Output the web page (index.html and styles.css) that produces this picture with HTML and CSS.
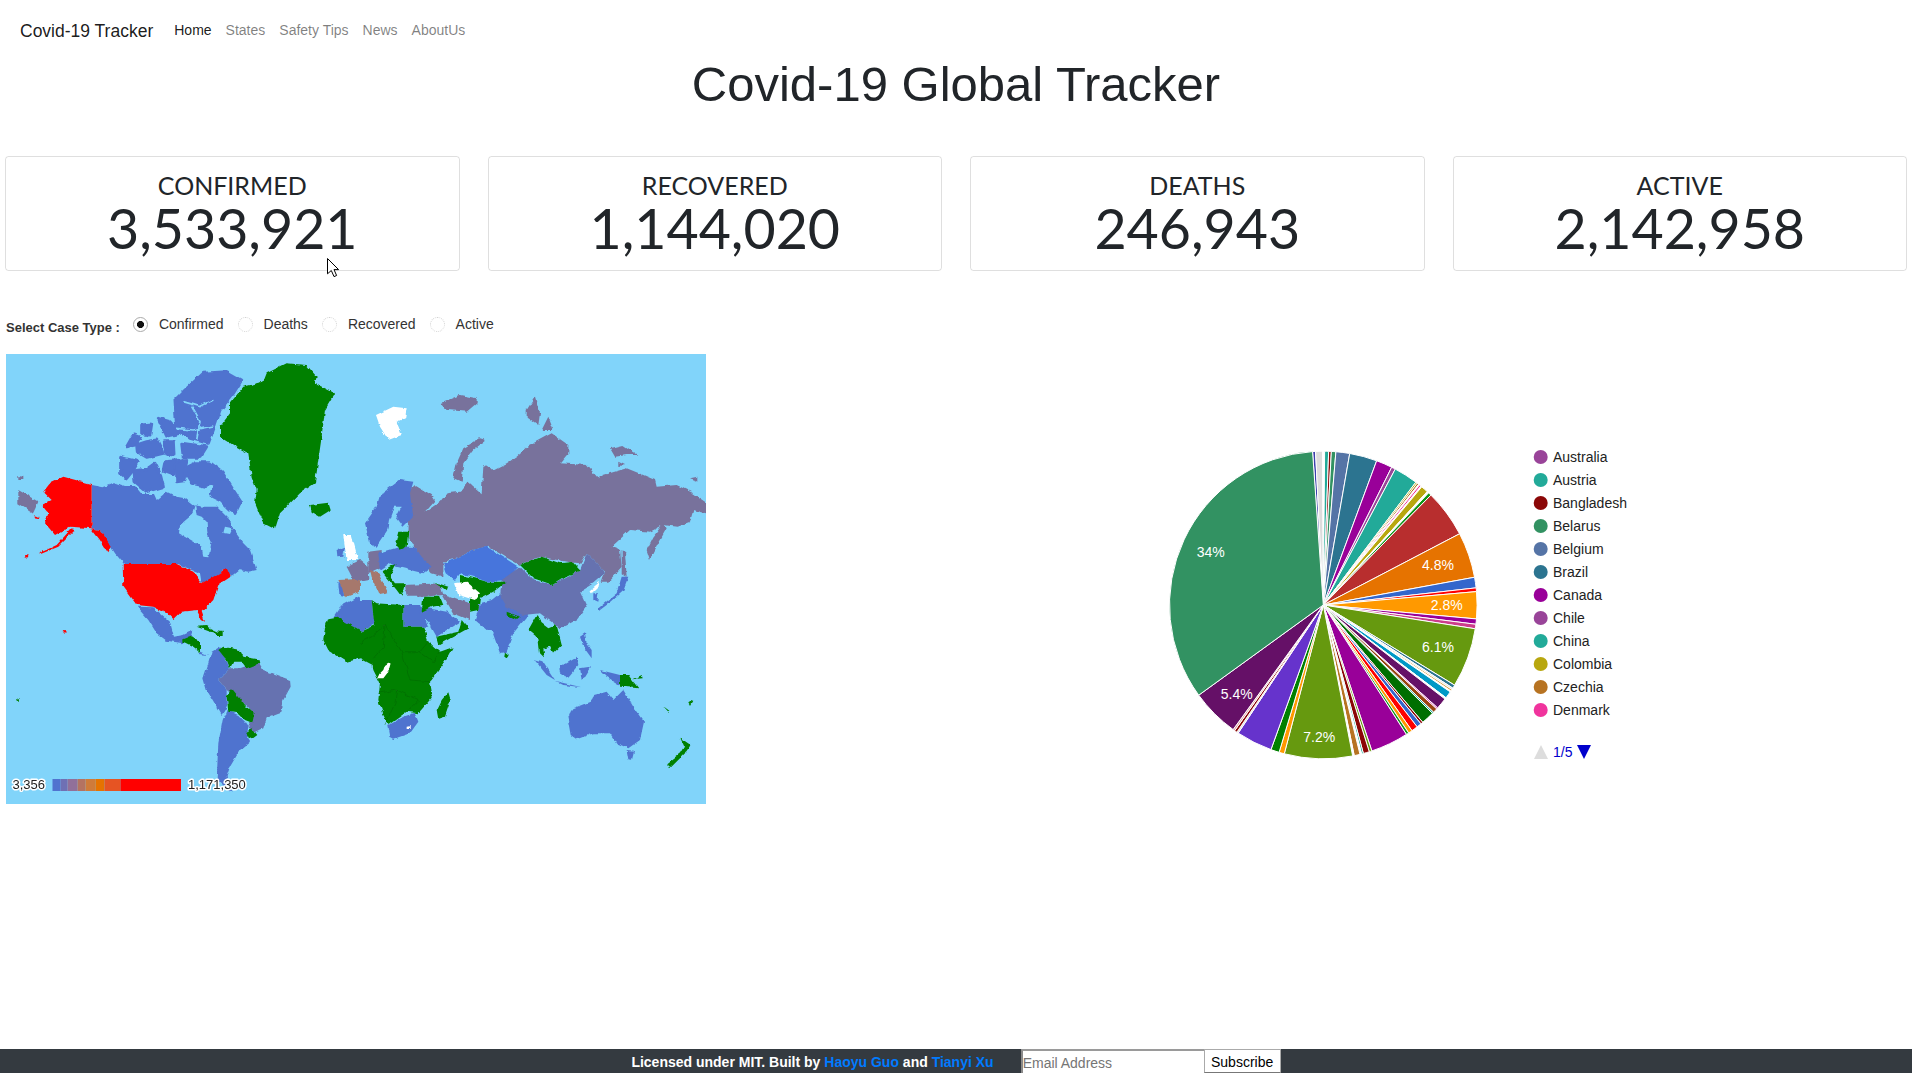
FILE: index.html
```html
<!DOCTYPE html>
<html lang="en">
<head>
<meta charset="utf-8">
<title>Covid-19 Global Tracker</title>
<link rel="stylesheet" href="styles.css">
</head>
<body>
<nav class="navbar">
  <a class="brand" href="#">Covid-19 Tracker</a>
  <ul class="nav-links">
    <li><a class="nav-link active" href="#">Home</a></li>
    <li><a class="nav-link" href="#">States</a></li>
    <li><a class="nav-link" href="#">Safety Tips</a></li>
    <li><a class="nav-link" href="#">News</a></li>
    <li><a class="nav-link" href="#">AboutUs</a></li>
  </ul>
</nav>
<main class="content">
  <h1 class="title">Covid-19 Global Tracker</h1>
  <section class="cards">
    <div class="card"><div class="card-label">CONFIRMED</div><div class="card-value">3,533,921</div></div>
    <div class="card"><div class="card-label">RECOVERED</div><div class="card-value">1,144,020</div></div>
    <div class="card"><div class="card-label">DEATHS</div><div class="card-value">246,943</div></div>
    <div class="card"><div class="card-label">ACTIVE</div><div class="card-value">2,142,958</div></div>
  </section>
  <form class="case-type">
    <span class="case-title">Select Case Type :</span>
    <label class="radio"><input type="radio" name="case" checked><span class="dot"></span>Confirmed</label>
    <label class="radio"><input type="radio" name="case"><span class="dot"></span>Deaths</label>
    <label class="radio"><input type="radio" name="case"><span class="dot"></span>Recovered</label>
    <label class="radio"><input type="radio" name="case"><span class="dot"></span>Active</label>
  </form>
  <section class="charts">
    <svg class="map" viewBox="6 354 700 450" width="700" height="450" xmlns="http://www.w3.org/2000/svg">
      <defs>
        <filter id="rough" filterUnits="userSpaceOnUse" x="0" y="340" width="720" height="480">
          <feTurbulence type="fractalNoise" baseFrequency="0.14" numOctaves="3" seed="4" result="n"/>
          <feDisplacementMap in="SourceGraphic" in2="n" scale="4" xChannelSelector="R" yChannelSelector="G"/>
        </filter>
      </defs>
      <rect x="6" y="354" width="700" height="450" class="sea"/>
      <g filter="url(#rough)">
      <!-- north america, atlantic: coordinates at 3x from (0,350) -->
      <g transform="translate(0,350) scale(.33333)">
        <g class="blue">
          <polygon points="276,405 310,412 345,398 375,408 405,408 425,432 462,432 470,450 500,425 530,440 555,445 580,465 610,470 650,470 690,510 705,545 730,580 750,600 770,660 745,665 720,660 695,680 670,660 640,685 605,700 600,670 575,660 535,642 372,642 345,610 300,540 276,535"/>
          <polygon points="410,770 460,772 510,815 522,860 550,855 580,840 570,868 550,880 500,872 470,850 445,810"/>
          <polygon points="1000,800 1020,770 1080,738 1080,840"/>
          <polygon points="1010,600 1035,590 1030,620 1012,622"/>
          <polygon points="1015,700 1030,700 1032,738 1018,735"/>
        </g>
        <g class="blue arctic">
          <polygon points="565,350 590,338 630,338 665,365 690,405 722,455 705,490 690,480 660,450 640,440 620,410 600,405 575,400 560,375"/>
          <polygon points="362,322 415,335 400,360 380,385 362,370"/>
          <polygon points="402,362 440,358 465,340 480,370 490,410 440,425 405,395"/>
          <polygon points="555,120 610,70 680,65 725,90 700,130 660,180 640,240 625,280 570,265 530,235 525,150"/>
          <polygon points="380,290 400,255 420,262 405,285"/>
          <polygon points="410,285 440,275 470,270 490,310 440,322 412,305"/>
          <polygon points="475,205 510,215 540,250 500,258"/>
          <polygon points="545,280 620,290 600,322 550,322"/>
          <polygon points="495,335 528,332 522,372 490,360"/>
          <polygon points="530,335 560,330 552,392 530,395"/>
          <polygon points="425,225 455,222 450,255 425,250"/>
          <polygon points="490,275 520,275 522,315 500,312"/>
        </g>
        <polygon class="sea" points="585,462 575,495 540,525 537,550 570,570 605,590 610,620 625,622 635,575 622,550 620,515 605,500 590,495"/>
        <polygon class="sea" points="675,530 698,535 690,552 670,548"/>
        <polygon class="sea" points="620,410 640,405 625,440 605,440"/>
        <polyline class="channel" points="550,155 600,170 640,150"/>
        <polyline class="channel" points="575,170 600,215 590,270"/>
        <polyline class="channel" points="528,235 580,240 640,228"/>
        <g class="green">
          <polygon points="660,230 690,190 690,160 730,110 790,95 800,70 860,40 920,45 950,80 945,100 975,115 1005,130 975,180 965,260 955,330 945,400 900,430 860,470 840,490 825,538 790,520 765,460 770,420 755,380 745,310 700,285 660,260"/>
          <polygon points="930,465 985,458 992,480 960,500 935,485"/>
        </g>
        <g class="red">
          <polygon points="275,403 190,380 150,400 130,425 155,450 125,465 145,490 135,520 165,555 210,530 275,535 300,540 335,590 325,610 300,570 275,538"/>
          <polygon points="118,610 170,585 215,535 220,545 175,590 122,612"/>
          <polygon points="100,495 118,500 118,505 102,502"/>
          <polygon points="368,642 530,642 580,665 605,700 640,680 680,655 692,680 655,705 640,750 605,785 615,815 605,810 590,780 545,785 520,810 500,790 460,770 410,765 370,710"/>
          <circle cx="80" cy="618" r="5"/>
          <circle cx="192" cy="847" r="4"/>
        </g>
        <g class="russia">
          <polygon points="55,420 115,455 100,488 55,460"/>
          <polygon points="55,378 70,380 70,390 55,390"/>
          <polygon points="1040,650 1080,630 1080,695 1060,690 1050,670"/>
        </g>
        <polygon class="brown" points="1015,690 1060,688 1080,695 1080,725 1035,742 1025,710"/>
        <polygon class="white" points="1030,555 1055,555 1075,630 1040,630"/>
      </g>
      <!-- eurasia: coordinates at 3x from (360,350) -->
      <g transform="translate(360,350) scale(.33333)">
        <polygon class="white" points="48,195 100,170 140,175 135,205 110,215 125,255 85,270 60,230"/>
        <g class="russia">
          <polygon points="148,420 165,405 215,435 225,450 190,490 240,455 260,430 300,425 325,395 365,430 370,350 385,345 400,360 440,340 470,320 510,285 575,250 625,285 625,310 600,340 680,345 715,385 730,375 800,355 850,375 885,390 890,410 950,405 1000,430 1038,455 1038,490 1000,480 990,515 950,530 910,525 870,545 810,540 755,590 780,600 785,650 745,695 725,695 735,665 680,610 660,640 620,635 540,620 480,645 435,620 385,590 335,600 290,625 250,635 250,680 215,670 190,640 165,590 145,570"/>
          <polygon points="280,385 290,340 310,295 360,265 378,270 340,300 310,340 305,395"/>
          <polygon points="500,180 525,140 540,190 535,225 500,200"/>
          <polygon points="545,240 565,200 580,240"/>
          <polygon points="240,160 300,135 350,145 350,160 320,185 260,180"/>
          <polygon points="750,295 790,285 835,315 800,315 765,320"/>
          <polygon points="775,335 795,345 775,348"/>
          <polygon points="990,385 1012,380 1012,392"/>
          <polygon points="785,600 795,610 800,680 785,670"/>
          <polygon points="860,600 880,560 910,520 920,535 895,580 870,630"/>
          <polygon points="135,705 240,700 250,735 190,740 140,740"/>
          <polygon points="245,730 330,760 330,810 280,790"/>
          <polygon points="0,630 25,650 28,690 0,695"/>
          <polygon points="25,605 65,600 65,650 25,670"/>
        </g>
        <g class="blue">
          <polygon points="60,435 120,390 160,395 150,430 160,500 130,530 100,490 90,530 50,590 30,580 15,520 50,470"/>
          <polygon points="55,610 120,590 165,590 185,620 215,650 190,670 150,660 110,650 90,640 60,660"/>
          <polygon points="395,750 420,730 450,750 490,775 505,795 480,825 460,850 440,905 420,910 395,840 380,840 345,810 360,760"/>
          <polygon points="130,765 180,765 205,830 130,830"/>
          <polygon points="180,795 180,770 260,785 300,815 230,860 205,815"/>
          <polygon points="700,730 715,730 712,755 700,750"/>
          <polygon points="715,775 770,730 785,680 805,680 790,720 740,765 720,780"/>
        </g>
        <polygon class="sea" points="105,470 125,470 100,520 85,540 90,510"/>
        <polygon class="kaz" points="250,640 290,625 335,600 380,590 435,625 475,650 440,690 380,695 340,680 300,670 285,690 260,670"/>
        <polygon class="china" points="425,690 480,650 520,690 580,705 660,660 680,610 730,660 735,670 700,700 660,725 680,770 650,810 600,835 540,790 490,795 440,775 420,740"/>
        <g class="green">
          <polygon points="115,545 145,545 140,590 120,600 105,585"/>
          <polygon points="65,665 110,640 90,680 105,700 135,700 125,740 110,720"/>
          <polygon points="220,695 265,710 260,725"/>
          <polygon points="300,675 345,685 380,695 440,695 400,725 360,745 355,780 330,785 330,745 300,700"/>
          <polygon points="480,645 545,620 600,640 640,635 662,660 620,680 580,705 520,685"/>
          <polygon points="190,740 240,740 250,765 215,770 185,785"/>
          <polygon points="305,810 325,835 235,885 228,860 295,845"/>
          <polygon points="440,785 480,800 470,808 440,795"/>
        </g>
        <polygon class="brown" points="30,660 55,670 85,730 60,735 35,680"/>
        <polygon class="white" points="282,700 320,695 360,730 345,750 295,735"/>
        <polygon class="white" points="690,720 720,695 715,710 695,730"/>
      </g>
      <!-- americas south: coordinates at 3x from (0,600) -->
      <g transform="translate(0,600) scale(.33333)">
        <g class="blue">
          <polygon points="610,235 625,190 635,155 660,140 690,205 655,240 680,270 680,320 665,345 620,270"/>
          <polygon points="680,330 715,345 735,365 745,380 740,410 750,425 720,450 690,500 680,530 695,575 650,540 655,430 668,360"/>
          <polygon points="600,155 625,165 595,162"/>
        </g>
        <polygon class="china" points="655,240 690,205 720,205 775,185 790,210 870,240 872,260 850,300 840,340 800,355 790,385 760,400 745,380 760,350 745,320 680,270"/>
        <g class="green">
          <polygon points="550,118 575,108 600,125 600,155 580,140 550,125"/>
          <polygon points="590,80 620,78 665,100 630,95"/>
          <polygon points="650,95 668,95 668,108 652,108"/>
          <polygon points="655,150 670,140 720,150 730,170 775,178 778,190 740,205 725,185 700,185 690,205 680,180"/>
          <polygon points="680,290 695,265 740,320 765,345 760,370 735,360 715,340 685,335"/>
          <polygon points="740,395 755,385 772,405 755,418 738,408"/>
          <polygon points="985,55 1010,50 1080,90 1080,175 1040,185 985,150 970,120 975,85"/>
          <circle cx="53" cy="302" r="4"/>
        </g>
      </g>
      <!-- africa, oceania: coordinates at 3x from (360,600) -->
      <g transform="translate(360,600) scale(.33333)">
        <g class="blue">
          <polygon points="0,0 35,0 40,50 50,70 0,95"/>
          <polygon points="622,350 640,325 690,305 705,285 740,275 760,300 790,270 820,320 852,365 840,420 805,445 770,430 750,400 700,400 650,418 632,405"/>
          <polygon points="800,450 822,452 815,480 805,478"/>
          <polygon points="522,178 550,185 585,240 560,225"/>
          <polygon points="585,243 665,262 610,255"/>
          <polygon points="600,200 650,170 655,195 625,230 605,225"/>
          <polygon points="660,205 690,200 665,240"/>
          <polygon points="720,210 780,225 780,255 740,230"/>
          <polygon points="660,110 675,100 680,130 695,150 695,175 670,140"/>
          <polygon points="82,378 130,350 165,338 175,365 150,400 100,417 88,410"/>
        </g>
        <g class="green">
          <polygon points="35,0 50,10 130,15 130,80 190,80 205,125 240,155 278,142 260,175 215,240 210,245 218,290 175,340 140,335 85,375 70,345 55,300 60,250 40,210 38,195 0,175 0,95 45,75 40,50"/>
          <polygon points="265,277 272,300 255,350 235,357 230,330 245,300"/>
          <polygon points="958,412 992,435 975,460 930,505 922,490 960,460 972,440"/>
          <polygon points="780,225 805,225 835,265 805,262 780,260"/>
          <polygon points="820,238 845,225 848,235"/>
          <polygon points="505,90 530,45 545,70 565,85 590,75 605,135 580,160 570,140 550,145 555,175 540,160 535,115"/>
          <polygon points="435,155 447,165 440,175 433,170"/>
          <polygon points="910,322 928,335 925,338"/>
          <polygon points="985,310 1000,300 990,318"/>
        </g>
        <g class="border">
          <polyline points="0,130 35,110 75,75 125,155 180,155 205,125"/>
          <polyline points="125,155 150,240 210,245"/>
          <polyline points="55,280 110,270 175,300 140,335"/>
          <polyline points="75,75 70,140 40,175"/>
          <polyline points="180,155 220,185 240,155"/>
          <polyline points="110,270 105,310 75,375"/>
        </g>
        <polygon class="white" points="85,188 92,190 85,215 70,235 52,235 58,222 70,210 75,195"/>
        <polygon class="white" points="140,380 152,378 152,387 140,387"/>
      </g>
      </g>
      <g class="scale">
        <rect x="52.5" y="779" width="8" height="12" fill="#5073cf"/>
        <rect x="60.5" y="779" width="7" height="12" fill="#6f70b4"/>
        <rect x="67.5" y="779" width="10" height="12" fill="#91709a"/>
        <rect x="77.5" y="779" width="8" height="12" fill="#b47362"/>
        <rect x="85.5" y="779" width="10" height="12" fill="#cf7b3a"/>
        <rect x="95.5" y="779" width="9" height="12" fill="#e67300"/>
        <rect x="104.5" y="779" width="16" height="12" fill="#e65423"/>
        <rect x="120.5" y="779" width="60.5" height="12" fill="#ff0000"/>
        <text class="scale-text" x="12.5" y="788.5">3,356</text>
        <text class="scale-text" x="188" y="788.5">1,171,350</text>
      </g>
    </svg>
    <svg class="pie-chart" viewBox="706 354 1206 450" width="1206" height="450" xmlns="http://www.w3.org/2000/svg">
      <g id="pie"></g>
      <g class="pie-labels">
        <text x="1210.7" y="557">34%</text>
        <text x="1438" y="570">4.8%</text>
        <text x="1446.7" y="610">2.8%</text>
        <text x="1438" y="652">6.1%</text>
        <text x="1319.3" y="742">7.2%</text>
        <text x="1236.7" y="699">5.4%</text>
      </g>
      <g class="legend">
        <circle cx="1540.7" cy="457" r="7" fill="#994499"/><text x="1553" y="462">Australia</text>
        <circle cx="1540.7" cy="480" r="7" fill="#22aa99"/><text x="1553" y="485">Austria</text>
        <circle cx="1540.7" cy="503" r="7" fill="#8b0707"/><text x="1553" y="508">Bangladesh</text>
        <circle cx="1540.7" cy="526" r="7" fill="#329262"/><text x="1553" y="531">Belarus</text>
        <circle cx="1540.7" cy="549" r="7" fill="#5574a6"/><text x="1553" y="554">Belgium</text>
        <circle cx="1540.7" cy="572" r="7" fill="#2c7490"/><text x="1553" y="577">Brazil</text>
        <circle cx="1540.7" cy="595" r="7" fill="#990099"/><text x="1553" y="600">Canada</text>
        <circle cx="1540.7" cy="618" r="7" fill="#994499"/><text x="1553" y="623">Chile</text>
        <circle cx="1540.7" cy="641" r="7" fill="#22aa99"/><text x="1553" y="646">China</text>
        <circle cx="1540.7" cy="664" r="7" fill="#b8a70f"/><text x="1553" y="669">Colombia</text>
        <circle cx="1540.7" cy="687" r="7" fill="#b77322"/><text x="1553" y="692">Czechia</text>
        <circle cx="1540.7" cy="710" r="7" fill="#f0349d"/><text x="1553" y="715">Denmark</text>
      </g>
      <polygon points="1534,759 1548,759 1541,745" fill="#dddddd"/>
      <text class="pager" x="1553" y="757">1/5</text>
      <polygon points="1577,745 1591,745 1584,759" fill="#0000cc"/>
    </svg>
  </section>
</main>
<footer class="footer">
  <p class="license">Licensed under MIT. Built by <a href="#">Haoyu Guo</a> and <a href="#">Tianyi Xu</a></p>
  <form class="subscribe">
    <input class="email" type="text" placeholder="Email Address">
    <button class="subscribe-btn" type="button">Subscribe</button>
  </form>
</footer>
<svg class="cursor" width="13" height="20" viewBox="0 0 13 20" xmlns="http://www.w3.org/2000/svg">
  <path d="M.5.5V15.8L4.3 12.5 7 18.6 9.6 17.5 7 11.6H11.6Z" fill="#fff" stroke="#000" stroke-width="1"/>
</svg>
<script src="app.js"></script>
</body>
</html>
```
FILE: styles.css
```css
* { box-sizing: border-box; }
html, body { margin: 0; padding: 0; }
body {
  min-height: 100vh;
  display: flex;
  flex-direction: column;
  font-family: "Liberation Sans", Arial, sans-serif;
  font-size: 14px;
  color: #212529;
  background: #fff;
  position: relative;
  overflow: hidden;
}
a { text-decoration: none; }

.navbar {
  display: flex;
  align-items: center;
  padding: 16px 20px 0;
  height: 46px;
}
.brand { font-size: 17.5px; color: rgba(0,0,0,.9); margin-right: 14px; line-height: 30px; }
.nav-links { display: flex; list-style: none; margin: -2px 0 0; padding: 0; }
.nav-link { display: block; padding: 0 7px; font-size: 14px; color: rgba(0,0,0,.5); }
.nav-link.active { color: rgba(0,0,0,.9); }

.content { flex: 1; }
.title {
  margin: 8px 0 0;
  font-size: 49px;
  font-weight: 400;
  line-height: 60px;
  text-align: center;
}
.cards {
  display: grid;
  grid-template-columns: repeat(4, 1fr);
  gap: 28px;
  padding: 0 5px;
  margin-top: 42px;
}
.card {
  height: 115px;
  border: 1px solid rgba(0,0,0,.125);
  border-radius: 3.5px;
  text-align: center;
  font-family: Lato, sans-serif;
  color: #212529;
  padding-top: 14px;
}
.card-label { font-size: 25px; line-height: 29px; }
.card-value { font-size: 55.5px; line-height: 56px; }

.case-type {
  display: flex;
  align-items: center;
  height: 20px;
  margin: 43px 0 0 6px;
  color: #333;
}
.case-title { font-size: 13px; font-weight: 700; margin-right: 13px; padding-top: 7px; }
.radio { display: flex; align-items: center; font-size: 14px; margin-right: 14px; }
.radio input { display: none; }
.dot {
  width: 15px;
  height: 15px;
  border-radius: 50%;
  border: 1px dotted #d2d2d2;
  margin-right: 11px;
  flex: none;
}
.radio input:checked + .dot {
  border: 1px solid #aaa;
  background: radial-gradient(circle, #111 0 3.2px, #fff 3.8px);
}

.charts { display: flex; margin: 20px 0 0 6px; }
.map, .pie-chart { display: block; flex: none; }

.sea { fill: #81d4fa; }
.channel { fill: none; stroke: #81d4fa; stroke-width: 5; }
.blue { fill: #5073cf; }
.arctic { stroke: #5073cf; stroke-width: 9; stroke-linejoin: round; }
.green { fill: #008000; }
.red { fill: #ff0000; }
.russia { fill: #78729c; }
.china { fill: #6672b0; }
.kaz { fill: #4674dc; }
.brown { fill: #a6786c; }
.white { fill: #fff; }
.border { fill: none; stroke: #0b6b0b; stroke-width: 2; }
.scale-text {
  font-family: "Liberation Sans", Arial, sans-serif;
  font-size: 13px;
  fill: #222;
  stroke: #fff;
  stroke-width: 3px;
  paint-order: stroke;
  stroke-linejoin: round;
}
.pie-labels text {
  font-size: 14px;
  fill: #fff;
  text-anchor: middle;
  font-family: "Liberation Sans", Arial, sans-serif;
}
.legend text {
  font-size: 14px;
  fill: #222;
  font-family: "Liberation Sans", Arial, sans-serif;
}
.pager { font-size: 14px; fill: #0000cc; font-family: "Liberation Sans", Arial, sans-serif; }

.footer {
  height: 24px;
  background: #343a40;
  display: flex;
  justify-content: center;
  align-items: stretch;
  gap: 27px;
}
.license { margin: 0; font-size: 14px; font-weight: 700; line-height: 26px; color: #fff; }
.license a { color: #007bff; }
.subscribe { display: flex; }
.email {
  width: 183px;
  height: 24px;
  padding: 1px 0 0;
  font: 14px "Liberation Sans", Arial, sans-serif;
  border: 0;
  border-top: 2px solid #9a9a9a;
  border-left: 2px solid #8a8a8a;
  background: #fff;
  color: #333;
}
.email::placeholder { color: #757575; }
.subscribe-btn {
  width: 77px;
  height: 24px;
  padding: 2px 0 0;
  font: 14px "Liberation Sans", Arial, sans-serif;
  color: #000;
  background: #fff;
  border: 1px solid #aaa;
  border-bottom-color: #777;
}
.cursor { position: absolute; left: 327px; top: 258px; pointer-events: none; }
```
FILE: app.js
```js
// Pie slices: [end angle in degrees clockwise from 12 o'clock, colour]; each starts where the last ended.
var slices = [
  [-2.9,'#3b3eac'],[-0.2,'#dcdcdc'],[0.5,'#ffffff'],[2.0,'#22aa99'],[3.0,'#8b0707'],[4.7,'#329262'],
  [9.9,'#5574a6'],[20.3,'#2c7490'],[26.4,'#990099'],[27.9,'#994499'],[37,'#22aa99'],[37.6,'#aaaa11'],
  [38.3,'#b77322'],[38.7,'#ffffff'],[39.4,'#f0349d'],[39.8,'#ffffff'],[42.5,'#b8a70f'],[43.2,'#ffffff'],
  [44.4,'#109618'],[62.4,'#b82e2e'],[79.6,'#e67300'],[83.6,'#3366cc'],[85,'#ff0000'],[95.2,'#ff9900'],
  [97.2,'#990099'],[98.9,'#cc3d8a'],[121.4,'#66990f'],[122.7,'#2c7490'],[123.3,'#dddddd'],[124,'#d8a040'],
  [124.4,'#ffffff'],[127.1,'#0099c6'],[127.7,'#ffffff'],[132,'#651067'],[132.5,'#dd00aa'],[134.2,'#994411'],
  [134.8,'#22aa99'],[139.7,'#006f00'],[140.6,'#8b0707'],[142.4,'#3366cc'],[144.8,'#ff0000'],[146.3,'#ff9900'],
  [147.3,'#109618'],[161.6,'#990099'],[162.6,'#66990f'],[164.9,'#8b0707'],[165.6,'#22aa99'],[166.2,'#ffffff'],
  [168.4,'#b77322'],[169,'#ffffff'],[194.7,'#66990f'],[196.7,'#ff9900'],[199.9,'#008000'],[213.6,'#6633cc'],
  [214.2,'#dddddd'],[215.2,'#8b0707'],[215.9,'#e0a0a0'],[234.1,'#651067'],[356,'#329262']
];
var cx = 1323.3, cy = 605, r = 153.8;
function point(a) {
  var t = a * Math.PI / 180;
  return (cx + r * Math.sin(t)).toFixed(2) + ' ' + (cy - r * Math.cos(t)).toFixed(2);
}
var pie = document.getElementById('pie');
var start = -4;
slices.forEach(function (s) {
  var large = s[0] - start > 180 ? 1 : 0;
  var p = document.createElementNS('http://www.w3.org/2000/svg', 'path');
  p.setAttribute('d', 'M' + cx + ' ' + cy + 'L' + point(start) + 'A' + r + ' ' + r + ' 0 ' + large + ' 1 ' + point(s[0]) + 'Z');
  p.setAttribute('fill', s[1]);
  p.setAttribute('stroke', '#fff');
  p.setAttribute('stroke-width', '1');
  pie.appendChild(p);
  start = s[0];
});
```
